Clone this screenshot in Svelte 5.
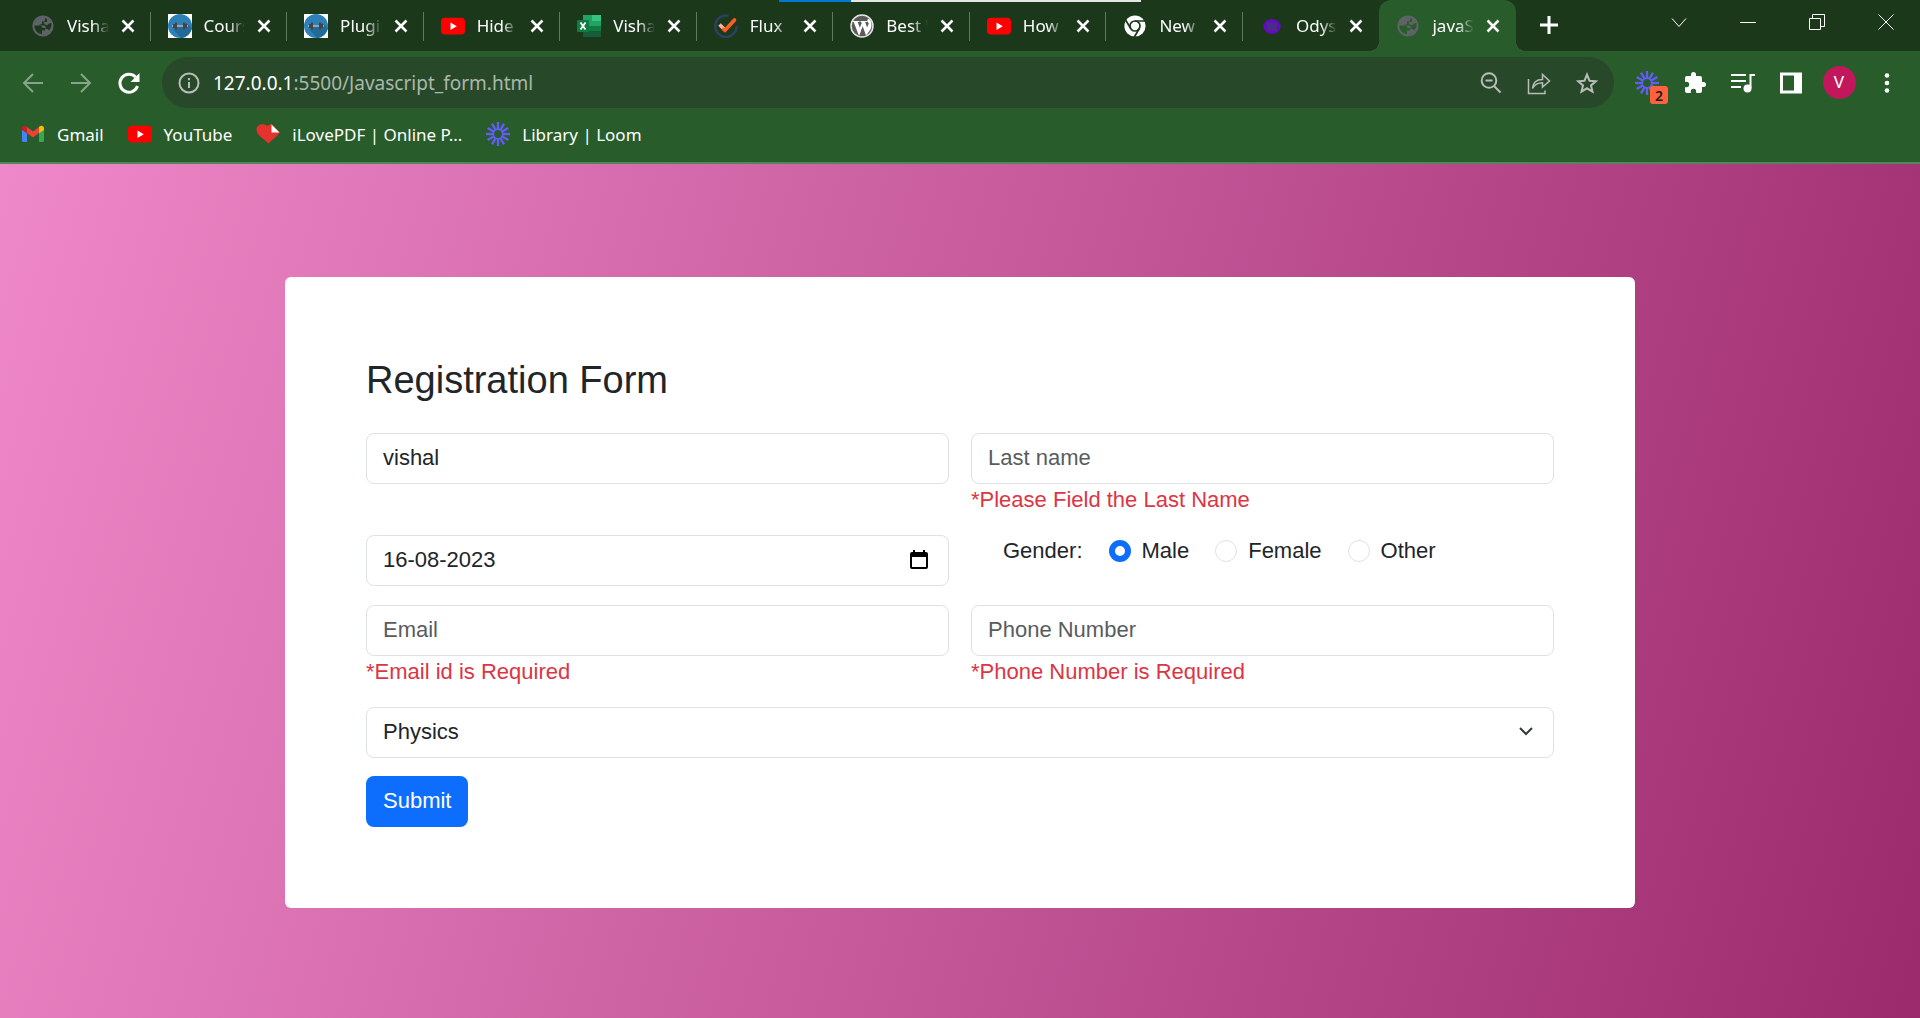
<script lang="ts">
  type Tab = { icon: string; title: string; active?: boolean };

  const tabs: Tab[] = [
    { icon: 'globe', title: 'Vishal' },
    { icon: 'gym', title: 'Course' },
    { icon: 'gym', title: 'Plugins' },
    { icon: 'youtube', title: 'Hide' },
    { icon: 'excel', title: 'Vishal' },
    { icon: 'flux', title: 'Flux' },
    { icon: 'wordpress', title: 'Best W' },
    { icon: 'youtube', title: 'How' },
    { icon: 'chrome', title: 'New' },
    { icon: 'odyssey', title: 'Odyssey' },
    { icon: 'globe', title: 'javaScript', active: true },
  ];

  const bookmarks = [
    { icon: 'gmail', title: 'Gmail' },
    { icon: 'youtube', title: 'YouTube' },
    { icon: 'lovepdf', title: 'iLovePDF | Online P...' },
    { icon: 'loom', title: 'Library | Loom' },
  ];

  const rays = Array.from({ length: 12 }, (_, i) => i * 30);
  const genders = ['Male', 'Female', 'Other'];

  let gender = $state('Male');
  let firstName = $state('vishal');
  let lastName = $state('');
  let birthDate = $state('16-08-2023');
  let email = $state('');
  let phone = $state('');
  let subject = $state('Physics');
</script>

{#snippet icon(name: string)}
  <svg class="icon" viewBox="0 0 24 24" aria-hidden="true">
    {#if name === 'globe'}
      <circle cx="12" cy="12" r="9.6" fill="none" stroke="#5f6368" stroke-width="2" />
      <circle cx="12" cy="12" r="9" fill="#5f6368" />
      <path class="land" d="M3.500 11.500H8q3 0 3.500 2.500h2.500v2.500h-3V20C6.500 20 3.500 16 3.500 11.500zM14 4v2q0 1.500-1.500 1.500H11v2q0 1-1 1H8.500v1h5q1 0 1 1v2.500h1.500q1.500 0 2 1.500 3-3.500 2.300-7.500l-2.300.5q-1 1.500-2.500 1.500T12.500 8.800l1-.8H16V5z" />
    {:else if name === 'gym'}
      <rect width="24" height="24" fill="#fff" />
      <circle cx="12" cy="12" r="12" fill="#2d81b7" />
      <path fill="#226a98" d="m5 15 13-6 6 5c-1 5-5 9.500-11 10z" />
      <path stroke="#bdb8b5" stroke-width="1.500" d="M4 12h16" />
      <path stroke="#444" stroke-width="2" d="M6 10v4M8 8.500v7M16 8.500v7M18 10v4" />
    {:else if name === 'youtube'}
      <rect y="3.800" width="24" height="16.800" rx="4" fill="#f00" />
      <path fill="#fff" d="m9.500 8.500 6.300 3.700-6.300 3.700z" />
    {:else if name === 'excel'}
      <path fill="#21a366" d="M6 1h18v22H6z" />
      <path fill="#33c481" d="M15 1h9v6h-9z" />
      <path fill="#107c41" d="M6 12h18v6H6z" />
      <path fill="#185c37" d="M6 17h18v6H6z" />
      <rect y="6" width="12" height="12" rx="1" fill="#107c41" />
      <path stroke="#fff" stroke-width="1.900" d="m3.500 8.500 5 7m0-7-5 7" />
    {:else if name === 'flux'}
      <path fill="none" stroke="#2c4160" stroke-width="2.500" d="M14.500 1.800A10.700 10.700 0 1 0 22.700 12" />
      <path fill="none" stroke="#ffb09a" stroke-width="3.600" d="m5.500 10.500 5 5" />
      <path fill="none" stroke="#ff5c28" stroke-width="3.600" stroke-linecap="round" d="m9.700 15.300 1.300 1L20.500 6" />
    {:else if name === 'wordpress'}
      <circle cx="12" cy="12" r="11" fill="#5a5a58" stroke="#e6e6e6" stroke-width="1.500" />
      <path fill="none" stroke="#fff" stroke-width="1.200" d="M2.500 7.500h7M10.500 7.500h7" />
      <path fill="#fff" d="M3.500 7.500h4L11 17l-2 5zM11 7.500h4l3 8.500-2 5.500zM9 21.500 7.800 19l3.700-9.500 1.300 2.500zM16 21.500l-1-3 3.800-9c-1.600-1.600-2-3.300-.8-4.500l2 .5c2 4 2 7 .5 10z" />
    {:else if name === 'chrome'}
      <circle cx="12" cy="12" r="10.600" fill="#fff" />
      <g fill="none" stroke="#1b381b" stroke-width="1.700">
        <circle cx="12" cy="12" r="5" />
        <path d="M12 7h10M7.700 14.500 2.500 5.800M16.300 14.500l-5 8.500" />
      </g>
    {:else if name === 'odyssey'}
      <ellipse cx="12" cy="12.500" rx="8.700" ry="7.600" fill="#640bb8" />
      <path fill="none" stroke="#4a2a8a" d="M8 9.500h8v6H8zM10 11.500h4v2h-4zM14 15l3 2" />
    {:else if name === 'gmail'}
      <path fill="#4285f4" d="M1 7.500 6 11v9H2.500A1.500 1.500 0 0 1 1 18.500z" />
      <path fill="#34a853" d="M18 11l5-3.500v11a1.500 1.500 0 0 1-1.500 1.500H18z" />
      <path fill="#ea4335" d="M6 5l6 4.500L18 5v6l-6 4.500L6 11z" />
      <path fill="#c5221f" d="M1 8V6.200C1 4 3.500 2.900 5.200 4.300L6 5v6.200z" />
      <path fill="#fbbc04" d="M23 8V6.200c0-2.200-2.500-3.300-4.200-1.900L18 5v6.200z" />
    {:else if name === 'lovepdf'}
      <path fill="#e5322d" d="M12.500 21.500C8 17 .5 13 .5 7.500.5 2.500 7.500.5 11.500 4c1-1 2.500-1.700 4-2l8 8c-.5 3-6 6.500-11 11.500z" />
      <path fill="#285c2b" d="M15.500 0H24v10z" />
      <path fill="#fff" d="M15.500 2.500v8h8z" />
    {:else if name === 'loom'}
      <g stroke="#625df5" stroke-width="2.300">
        {#each rays as angle}
          <path d="M12 0v7.500" transform="rotate({angle} 12 12)" />
        {/each}
        <circle cx="12" cy="12" r="4.800" fill="none" stroke-width="1.800" />
      </g>
    {/if}
  </svg>
{/snippet}

<div class="screen">
  <header class="browser">
    <div class="edge" aria-hidden="true"></div>
    <div class="strip">
      <div class="tabs">
        {#each tabs as tab}
          <div class="tab" class:active={tab.active}>
            {@render icon(tab.icon)}
            <span class="title">{tab.title}</span>
            <button class="close" aria-label="Close tab">
              <svg viewBox="0 0 14 14"><path d="m1.500 1.500 11 11m0-11-11 11" /></svg>
            </button>
          </div>
        {/each}
      </div>
      <div class="window">
        <button class="plus" aria-label="New tab">
          <svg viewBox="0 0 18 18"><path d="M9 0v18M0 9h18" /></svg>
        </button>
        <div class="controls">
          <button aria-label="Search tabs"><svg viewBox="0 0 16 16"><path d="m1 4.500 7 8 7-8" /></svg></button>
          <button aria-label="Minimise"><svg viewBox="0 0 16 16"><path d="M0 8.500h16" /></svg></button>
          <button aria-label="Restore"><svg viewBox="0 0 16 16"><path d="M.5 4.500h11v11H.500zM3.500 4.500v-4h12v12h-4" /></svg></button>
          <button aria-label="Close"><svg viewBox="0 0 16 16"><path d="m.5.5 15 15m0-15-15 15" /></svg></button>
        </div>
      </div>
    </div>

    <div class="toolbar">
      <nav class="group">
        <button class="tool" aria-label="Back"><svg class="dim" viewBox="0 0 24 24"><path d="M22 12H3.500M12 3l-9 9 9 9" /></svg></button>
        <button class="tool" aria-label="Forward"><svg class="dim" viewBox="0 0 24 24"><path d="M2 12h18.500M12 3l9 9-9 9" /></svg></button>
        <button class="tool" aria-label="Reload">
          <svg viewBox="0 0 24 24"><path class="reload" d="M20.500 15A9 9 0 1 1 18.500 6" /><path class="solid" d="M22.500 2v9h-9z" /></svg>
        </button>
      </nav>
      <div class="omnibox">
        <svg class="info" viewBox="0 0 24 24"><circle cx="12" cy="12" r="9.500" /><path d="M12 11v6M12 7v2.200" /></svg>
        <div class="url"><b>127.0.0.1</b>:5500/Javascript_form.html</div>
        <button class="tool" aria-label="Zoom">
          <svg class="pale" viewBox="0 0 24 24"><circle cx="10" cy="9.500" r="7.300" /><path d="m15 15 6.500 6.500M6.500 9.500h7" /></svg>
        </button>
        <button class="tool" aria-label="Share">
          <svg class="pale thin" viewBox="0 0 24 24"><path d="M1.500 8v14.500h16.500v-3M5.500 17.500c.5-6 4-9 10-9V3.500l7 6.500-7 6v-4.300c-5 0-8 2-10 5.800z" /></svg>
        </button>
        <button class="tool" aria-label="Bookmark">
          <svg class="pale" viewBox="0 0 24 24"><path d="m12 3.700 2.500 6 6.300.5-4.800 4.200 1.500 6.300L12 17.300l-5.500 3.400L8 14.400l-4.800-4.200 6.300-.5z" /></svg>
        </button>
      </div>
      <div class="group">
        <button class="tool" aria-label="Loom">{@render icon('loom')}<span class="badge">2</span></button>
        <button class="tool" aria-label="Extensions">
          <svg viewBox="0 0 24 24"><path class="solid" d="M20.500 11H19V7a2 2 0 0 0-2-2h-4V3.500a2.500 2.500 0 0 0-5 0V5H4a2 2 0 0 0-2 2v3.800h1.500a2.700 2.700 0 0 1 0 5.400H2V20a2 2 0 0 0 2 2h3.800v-1.500a2.700 2.700 0 0 1 5.400 0V22H17a2 2 0 0 0 2-2v-4h1.500a2.500 2.500 0 0 0 0-5z" /></svg>
        </button>
        <button class="tool" aria-label="Media">
          <svg viewBox="0 0 24 24"><path class="media" d="M0 4h15M0 10h15M0 16h10" /><path class="media" d="M24 4h-4.500v13" /><circle class="solid" cx="16.500" cy="17.500" r="4" /></svg>
        </button>
        <button class="tool" aria-label="Side panel">
          <svg viewBox="0 0 24 24"><path class="solid" fill-rule="evenodd" d="M1 1.500h22v21H1zM4 4.500v15h11v-15z" /></svg>
        </button>
        <button class="tool" aria-label="Profile"><span class="avatar">V</span></button>
        <button class="tool" aria-label="Menu">
          <svg viewBox="0 0 24 24"><g class="solid"><circle cx="12" cy="4.500" r="2.300" /><circle cx="12" cy="12" r="2.300" /><circle cx="12" cy="19.500" r="2.300" /></g></svg>
        </button>
      </div>
    </div>

    <nav class="bookmarks">
      {#each bookmarks as mark}
        <a href="#{mark.icon}">{@render icon(mark.icon)}{mark.title}</a>
      {/each}
    </nav>
  </header>

  <main>
    <form class="card" onsubmit={(event) => event.preventDefault()}>
      <h1>Registration Form</h1>
      <div class="fields">
        <div class="field">
          <input class="control" aria-label="First name" placeholder="First name" bind:value={firstName} />
        </div>
        <div class="field">
          <input class="control" aria-label="Last name" placeholder="Last name" bind:value={lastName} />
          <p class="error">*Please Field the Last Name</p>
        </div>
        <div class="field">
          <div class="control date">
            <input aria-label="Date of birth" bind:value={birthDate} />
            <button type="button" aria-label="Open calendar">
              <svg viewBox="0 0 18 20"><path fill-rule="evenodd" d="M2 2h1V0h2v2h8V0h2v2h1q2 0 2 2v13q0 2-2 2H2q-2 0-2-2V4q0-2 2-2zM2 7v10h14V7z" /></svg>
            </button>
          </div>
        </div>
        <div class="genders" role="radiogroup" aria-label="Gender">
          <span>Gender:</span>
          {#each genders as option}
            <label><input type="radio" name="gender" value={option} bind:group={gender} />{option}</label>
          {/each}
        </div>
        <div class="field">
          <input class="control" type="email" aria-label="Email" placeholder="Email" bind:value={email} />
          <p class="error">*Email id is Required</p>
        </div>
        <div class="field">
          <input class="control" type="tel" aria-label="Phone Number" placeholder="Phone Number" bind:value={phone} />
          <p class="error">*Phone Number is Required</p>
        </div>
        <div class="wide">
          <select class="control" aria-label="Subject" bind:value={subject}>
            <option>Physics</option>
            <option>Chemistry</option>
            <option>Maths</option>
          </select>
          <svg class="arrow" viewBox="0 0 16 16" aria-hidden="true"><path d="m2 5 6 6 6-6" /></svg>
        </div>
      </div>
      <button class="submit" type="submit">Submit</button>
    </form>
  </main>
</div>

<style>
  :global(body) {
    margin: 0;
  }
  .screen,
  .screen * {
    box-sizing: border-box;
  }
  .screen {
    display: flex;
    flex-direction: column;
    min-height: 100vh;
    font-family: 'Liberation Sans', Arial, sans-serif;
  }
  button {
    border: 0;
    padding: 0;
    background: none;
    color: inherit;
    font: inherit;
  }
  svg {
    display: block;
    flex: none;
    fill: none;
    stroke-width: 2;
  }
  .icon {
    width: 24px;
    height: 24px;
  }
  .solid {
    fill: #fff;
    stroke: none;
  }

  /* Browser chrome */
  .browser {
    position: relative;
    background: #285c2b;
    color: #fff;
    border-bottom: 2px solid #53855a;
    font-family: 'Noto Sans', 'Open Sans', sans-serif;
    font-size: 17px;
  }
  .edge {
    position: absolute;
    top: 0;
    left: 779px;
    width: 362px;
    height: 2px;
    background: linear-gradient(90deg, #0078d4 20%, #e3e6e3 20%);
  }
  .strip {
    display: flex;
    height: 51px;
    padding-left: 14px;
    background: #1b381b;
  }
  .tabs {
    display: flex;
    flex: 1;
    min-width: 0;
  }
  .tab {
    position: relative;
    display: flex;
    flex: 1 1 0;
    align-items: center;
    gap: 12px;
    min-width: 0;
    padding: 0 17px;
  }
  .tab::after {
    content: '';
    position: absolute;
    right: 0;
    top: 12px;
    width: 1px;
    height: 29px;
    background: #5d7a5d;
  }
  .tab:nth-last-child(-n + 2)::after {
    display: none;
  }
  .tab.active {
    border-radius: 12px 12px 0 0;
    background: #285c2b;
  }
  .tab.active::before {
    content: '';
    position: absolute;
    bottom: 0;
    left: -10px;
    right: -10px;
    height: 10px;
    background:
      radial-gradient(circle at 0 0, transparent 10px, #285c2b 10px) left / 10px 10px no-repeat,
      radial-gradient(circle at 100% 0, transparent 10px, #285c2b 10px) right / 10px 10px no-repeat;
  }
  .land {
    fill: #1b381b;
  }
  .active .land {
    fill: #285c2b;
  }
  .title {
    flex: 1;
    min-width: 0;
    overflow: hidden;
    white-space: nowrap;
    mask-image: linear-gradient(90deg, #000 60%, transparent 100%);
  }
  .close {
    margin-right: -1px;
  }
  .close svg {
    width: 14px;
    height: 14px;
    stroke: #fff;
    stroke-width: 2.500;
  }
  .window {
    display: flex;
    justify-content: space-between;
    width: 404px;
    padding-left: 16px;
  }
  .plus {
    width: 34px;
    height: 50px;
  }
  .plus svg {
    width: 18px;
    height: 18px;
    margin: auto;
    stroke: #fff;
    stroke-width: 3;
  }
  .controls {
    display: flex;
  }
  .controls button {
    width: 69px;
    height: 43px;
  }
  .controls svg {
    width: 16px;
    height: 16px;
    margin: auto;
    stroke: #fff;
    stroke-width: 1;
  }
  .toolbar {
    display: flex;
    align-items: center;
    gap: 9px;
    padding: 6px 9px;
  }
  .group {
    display: flex;
  }
  .tool {
    position: relative;
    display: flex;
    align-items: center;
    justify-content: center;
    width: 48px;
    height: 48px;
  }
  .tool svg {
    width: 24px;
    height: 24px;
    stroke: #fff;
  }
  .tool .dim {
    stroke: #87a589;
  }
  .tool .pale {
    stroke: #b7bdb7;
  }
  .tool .thin {
    stroke-width: 1.500;
  }
  .reload {
    stroke-width: 3;
  }
  .solid,
  .solid * {
    stroke: none;
  }
  .omnibox {
    display: flex;
    flex: 1;
    align-items: center;
    height: 51px;
    padding: 0 3px 0 15px;
    border-radius: 26px;
    background: #28482a;
    color: #a9b8aa;
    font-size: 19px;
  }
  .info {
    width: 24px;
    height: 24px;
    stroke: #b7bdb7;
  }
  .url {
    flex: 1;
    margin-left: 12px;
  }
  .url b {
    color: #fff;
    font-weight: 400;
  }
  .badge {
    position: absolute;
    left: 27px;
    top: 27px;
    width: 18px;
    height: 18px;
    border-radius: 3px;
    background: #ff623c;
    color: #1b1b1b;
    font-size: 14px;
    font-weight: 600;
    line-height: 19px;
    text-align: center;
  }
  .avatar {
    width: 33px;
    height: 33px;
    border-radius: 50%;
    background: #c2185b;
    font-family: Roboto, sans-serif;
    line-height: 33px;
    text-align: center;
  }
  .bookmarks {
    display: flex;
    align-items: center;
    gap: 24px;
    height: 48px;
    padding: 0 21px 8px;
  }
  .bookmarks a {
    display: flex;
    align-items: center;
    gap: 12px;
    color: #fff;
    text-decoration: none;
  }

  /* Page */
  main {
    flex: 1;
    padding: 113px 24px;
    background: linear-gradient(105deg, #ef88c8, #9b2a6c);
    color: #212529;
    font-size: 22px;
    line-height: 32px;
  }
  .card {
    max-width: 1350px;
    margin: 0 auto;
    padding: 81px;
    border-radius: 6px;
    background: #fff;
  }
  h1 {
    margin: 0 0 30px;
    font-size: 38px;
    font-weight: 400;
    line-height: 45px;
  }
  .fields {
    display: grid;
    grid-template-columns: 1fr 1fr;
    gap: 19px 22px;
  }
  .control {
    display: block;
    width: 100%;
    height: 51px;
    padding: 0 16px 2px;
    border: 1px solid #dee2e6;
    border-radius: 8px;
    background: #fff;
    color: #212529;
    font: inherit;
  }
  .control::placeholder {
    color: #595c5f;
    opacity: 1;
  }
  .error {
    margin: 0;
    color: #dc3545;
  }
  .date {
    display: flex;
    align-items: center;
    padding-right: 20px;
  }
  .date input {
    flex: 1;
    min-width: 0;
    border: 0;
    padding: 0;
    color: inherit;
    font: inherit;
  }
  .date svg {
    width: 18px;
    height: 20px;
    fill: #000;
  }
  .genders {
    display: flex;
    gap: 26px;
    padding-left: 32px;
  }
  .genders label {
    display: flex;
    align-items: center;
    gap: 11px;
    height: 32px;
  }
  .genders input {
    appearance: none;
    width: 22px;
    height: 22px;
    margin: 0;
    border: 1px solid #dee2e6;
    border-radius: 50%;
  }
  .genders input:checked {
    border: 6px solid #0d6efd;
  }
  .wide {
    position: relative;
    grid-column: 1 / -1;
  }
  select.control {
    appearance: none;
  }
  .arrow {
    position: absolute;
    right: 20px;
    top: 16px;
    width: 16px;
    height: 16px;
    stroke: #343a40;
    pointer-events: none;
  }
  .submit {
    display: block;
    height: 51px;
    margin-top: 18px;
    padding: 0 17px 2px;
    border-radius: 8px;
    background: #0d6efd;
    color: #fff;
  }
</style>
